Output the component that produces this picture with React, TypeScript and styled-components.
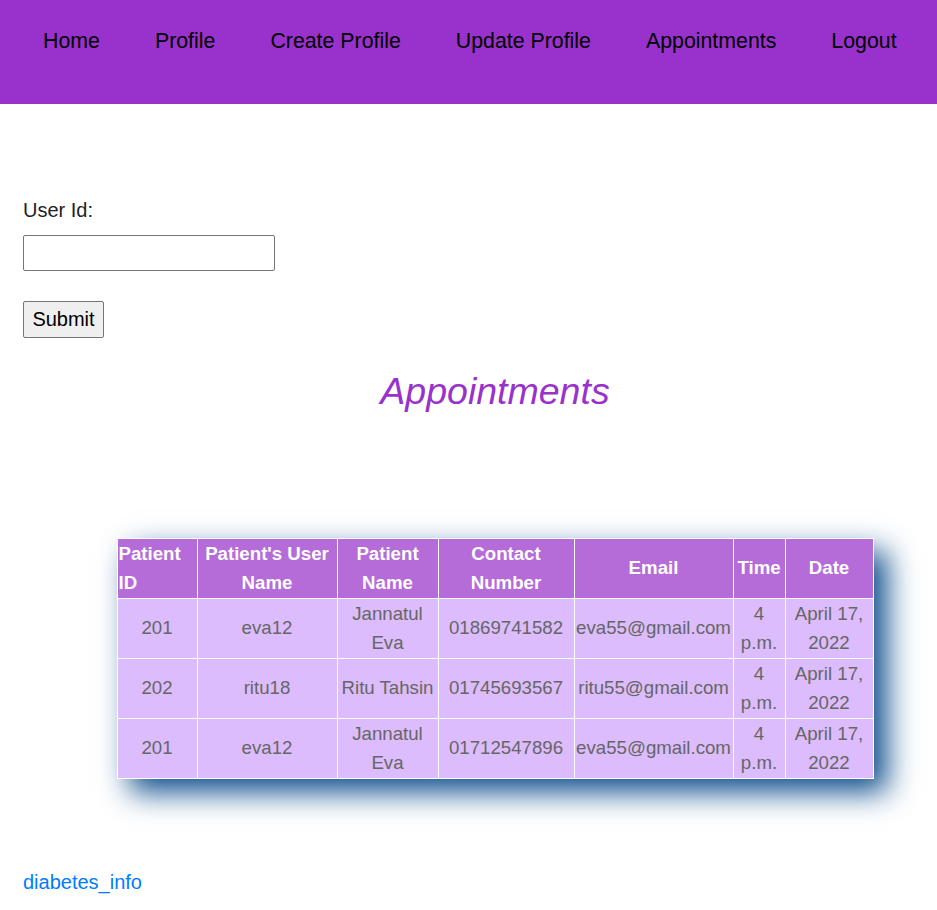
import React from "react";
import styled, { createGlobalStyle } from "styled-components";

const GlobalStyle = createGlobalStyle`
  html, body { margin: 0; padding: 0; background: #ffffff; }
  body { font-family: "Liberation Sans", Arial, sans-serif; }
`;

const Nav = styled.nav`
  background: #9932cc;
  height: 104px;
  display: flex;
  align-items: flex-start;
  padding-left: 15.5px;
  box-sizing: border-box;
`;

const NavLink = styled.a`
  display: block;
  color: #000;
  text-decoration: none;
  font-size: 21.33px;
  line-height: 24px;
  padding: 29px 27.5px 0;
`;

const Main = styled.main`
  padding: 0 23px;
`;

const Form = styled.form`
  display: flex;
  flex-direction: column;
  align-items: flex-start;
  padding-top: 95px;
`;

const Label = styled.label`
  font-size: 20px;
  line-height: 23px;
  color: #222;
`;

const Input = styled.input`
  box-sizing: border-box;
  width: 252px;
  height: 36px;
  margin-top: 13px;
  border: 1px solid #767676;
  border-radius: 2px;
  font-size: 20px;
`;

const Button = styled.button`
  box-sizing: border-box;
  margin-top: 30px;
  height: 37px;
  width: 81px;
  padding: 0;
  font-family: "Liberation Sans", Arial, sans-serif;
  font-size: 20px;
  color: #000;
  background: #efefef;
  border: 1px solid #767676;
  border-radius: 2px;
`;

const Section = styled.section`
  padding-left: 53px;
  display: flex;
  flex-direction: column;
  align-items: center;
`;

const Heading = styled.h2`
  margin: 32px 0 0;
  font-size: 37.5px;
  line-height: 42px;
  font-style: italic;
  font-weight: normal;
  color: #9932cc;
`;

const Table = styled.table`
  margin-top: 126px;
  width: 756px;
  table-layout: fixed;
  border-collapse: collapse;
  border: 1px solid #ffffff;
  box-shadow: 13px 13px 28px rgb(15, 78, 140);
  font-size: 18.67px;
  line-height: 28.5px;
`;

const Th = styled.th<{ $align?: string }>`
  background: #b56cd9;
  color: #ffffff;
  font-weight: bold;
  padding: 1px;
  border: 1px solid #ffffff;
  text-align: ${(p) => p.$align || "center"};
`;

const Td = styled.td`
  background: #dcbcfc;
  color: #666666;
  padding: 1px;
  border: 1px solid #ffffff;
  text-align: center;
`;

const FooterLink = styled.a`
  display: inline-block;
  margin-top: 92px;
  font-size: 20px;
  line-height: 23px;
  color: #007bff;
  text-decoration: none;
`;

const links = ["Home", "Profile", "Create Profile", "Update Profile", "Appointments", "Logout"];

const colWidths = [80, 140, 101, 136, 159, 52, 88];

const rows = [
  { id: "201", user: "eva12", name: "Jannatul Eva", phone: "01869741582", email: "eva55@gmail.com" },
  { id: "202", user: "ritu18", name: "Ritu Tahsin", phone: "01745693567", email: "ritu55@gmail.com" },
  { id: "201", user: "eva12", name: "Jannatul Eva", phone: "01712547896", email: "eva55@gmail.com" },
];

export default function App() {
  return (
    <>
      <GlobalStyle />
      <Nav>
        {links.map((l) => (
          <NavLink key={l} href="#">
            {l}
          </NavLink>
        ))}
      </Nav>
      <Main>
        <Form onSubmit={(e) => e.preventDefault()}>
          <Label htmlFor="uid">User Id:</Label>
          <Input id="uid" type="text" />
          <Button type="submit">Submit</Button>
        </Form>
        <Section>
          <Heading>Appointments</Heading>
          <Table>
            <colgroup>
              {colWidths.map((w, i) => (
                <col key={i} style={{ width: w }} />
              ))}
            </colgroup>
            <thead>
              <tr>
                <Th $align="left">Patient ID</Th>
                <Th>Patient's User Name</Th>
                <Th>Patient Name</Th>
                <Th>Contact Number</Th>
                <Th>Email</Th>
                <Th>Time</Th>
                <Th>Date</Th>
              </tr>
            </thead>
            <tbody>
              {rows.map((r, i) => (
                <tr key={i}>
                  <Td>{r.id}</Td>
                  <Td>{r.user}</Td>
                  <Td>{r.name}</Td>
                  <Td>{r.phone}</Td>
                  <Td>{r.email}</Td>
                  <Td>4 p.m.</Td>
                  <Td>April 17, 2022</Td>
                </tr>
              ))}
            </tbody>
          </Table>
        </Section>
        <FooterLink href="#">diabetes_info</FooterLink>
      </Main>
    </>
  );
}
